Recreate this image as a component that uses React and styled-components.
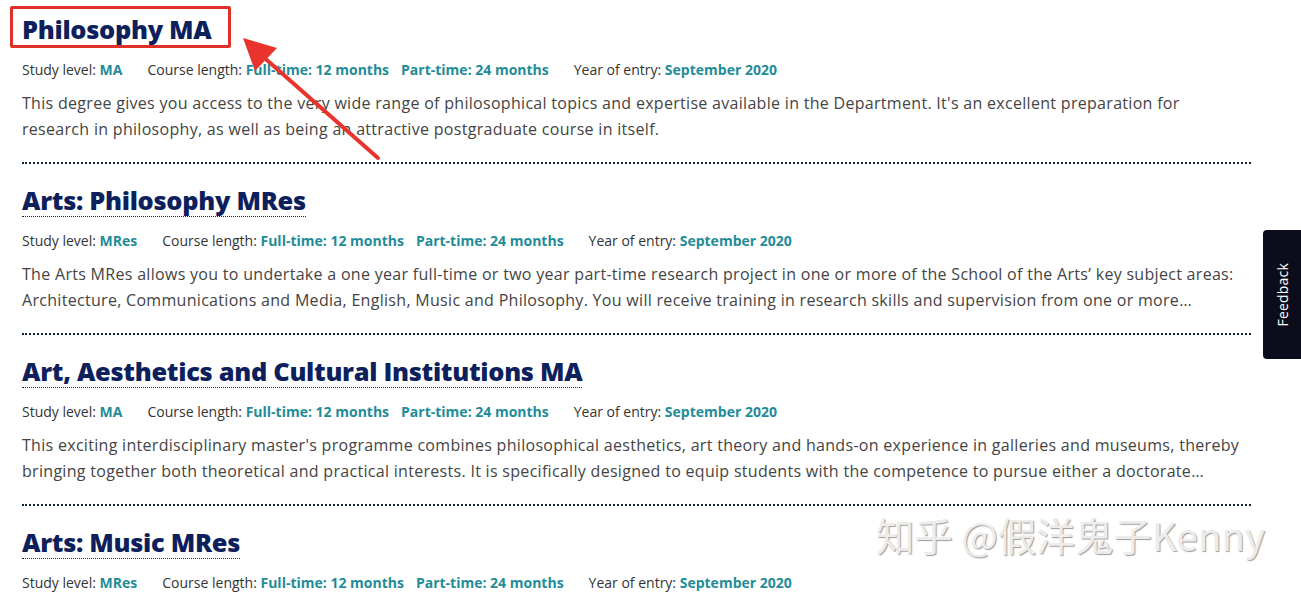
import React from "react";
import styled, { createGlobalStyle } from "styled-components";

const courses = [
  {
    title: "Philosophy MA",
    level: "MA",
    text:
      "This degree gives you access to the very wide range of philosophical topics and expertise available in the Department. It's an excellent preparation for research in philosophy, as well as being an attractive postgraduate course in itself.",
  },
  {
    title: "Arts: Philosophy MRes",
    level: "MRes",
    text:
      "The Arts MRes allows you to undertake a one year full-time or two year part-time research project in one or more of the School of the Arts’ key subject areas: Architecture, Communications and Media, English, Music and Philosophy. You will receive training in research skills and supervision from one or more…",
  },
  {
    title: "Art, Aesthetics and Cultural Institutions MA",
    level: "MA",
    text:
      "This exciting interdisciplinary master's programme combines philosophical aesthetics, art theory and hands-on experience in galleries and museums, thereby bringing together both theoretical and practical interests. It is specifically designed to equip students with the competence to pursue either a doctorate…",
  },
  {
    title: "Arts: Music MRes",
    level: "MRes",
    text: "",
  },
];

const App = () => {
  return (
    <Page>
      <GlobalStyle />
      <List>
        {courses.map((c, i) => (
          <Course key={i} $last={i === courses.length - 1}>
            <Title>{c.title}</Title>
            <Meta>
              <MetaItem>
                Study level: <Value>{c.level}</Value>
              </MetaItem>
              <MetaItem>
                Course length: <Value>Full-time: 12 months</Value>
                <Value $gap>Part-time: 24 months</Value>
              </MetaItem>
              <MetaItem>
                Year of entry: <Value>September 2020</Value>
              </MetaItem>
            </Meta>
            {c.text && <Desc>{c.text}</Desc>}
          </Course>
        ))}
      </List>

      <Highlight />
      <Arrow width="160" height="140" viewBox="0 0 160 140">
        <line x1="138" y1="122" x2="20" y2="18" stroke="#e8342c" strokeWidth="4" strokeLinecap="round" />
        <polygon points="3,2 37,12 15,35" fill="#e8342c" />
      </Arrow>

      <FeedbackTab>
        <FeedbackText>Feedback</FeedbackText>
      </FeedbackTab>

      <Watermark>知乎 @假洋鬼子Kenny</Watermark>
    </Page>
  );
};

export default App;

const GlobalStyle = createGlobalStyle`
  html, body {
    margin: 0;
    padding: 0;
    background: #ffffff;
  }
  body {
    font-family: "Open Sans", "Noto Sans", sans-serif;
    overflow: hidden;
  }
`;

const Page = styled.div`
  position: relative;
  width: 1301px;
  height: 593px;
  overflow: hidden;
`;

const List = styled.div`
  width: 1229px;
  padding-left: 22px;
`;

const Course = styled.div`
  padding: 20px 0 20px;
  border-bottom: ${(p) => (p.$last ? "none" : "2px dotted #13233a")};
  &:first-child {
    padding-top: 13px;
  }
`;

const Title = styled.h2`
  display: inline-block;
  margin: 0 0 14px;
  font-family: "Open Sans", sans-serif;
  font-size: 25.4px;
  font-weight: 800;
  line-height: 32px;
  color: #0d1f5c;
  letter-spacing: -0.3px;
  border-bottom: 1px dotted #222;
`;

const Meta = styled.div`
  display: flex;
  gap: 25px;
  font-size: 14px;
  line-height: 20px;
  color: #333;
  margin-bottom: 10px;
`;

const MetaItem = styled.span`
  white-space: nowrap;
`;

const Value = styled.span`
  color: #1f8c98;
  font-weight: 700;
  margin-left: ${(p) => (p.$gap ? "12px" : "0")};
`;

const Desc = styled.p`
  margin: 0;
  font-size: 16px;
  line-height: 26px;
  letter-spacing: 0.3px;
  color: #444;
`;

const Highlight = styled.div`
  position: absolute;
  left: 10px;
  top: 6px;
  width: 215px;
  height: 36px;
  border: 3px solid #e0302a;
  border-radius: 2px;
`;

const Arrow = styled.svg`
  position: absolute;
  left: 240px;
  top: 36px;
`;

const FeedbackTab = styled.div`
  position: absolute;
  right: 0;
  top: 230px;
  width: 38px;
  height: 129px;
  background: #0b0d1c;
  border-radius: 4px 0 0 4px;
  display: flex;
  align-items: center;
  justify-content: center;
`;

const FeedbackText = styled.span`
  writing-mode: vertical-rl;
  transform: rotate(180deg);
  color: #ffffff;
  font-size: 14px;
  font-family: "Open Sans", sans-serif;
  letter-spacing: 0.2px;
`;

const Watermark = styled.div`
  position: absolute;
  left: 876px;
  top: 506px;
  font-family: "Noto Sans CJK SC", "Noto Sans", sans-serif;
  font-size: 38.5px;
  color: #ececec;
  text-shadow: 1px 1px 1px #9c9c9c;
  white-space: nowrap;
`;
